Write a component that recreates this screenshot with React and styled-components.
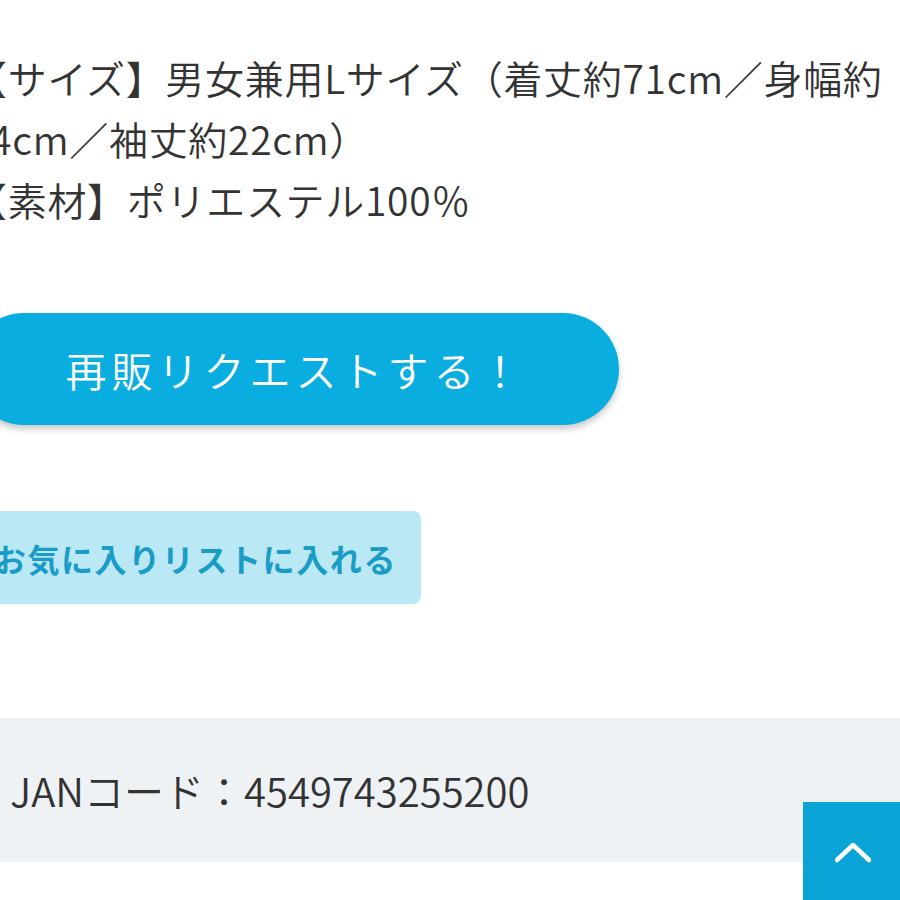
import React from "react";
import styled, { createGlobalStyle } from "styled-components";

const GlobalStyle = createGlobalStyle`
  html, body { margin: 0; padding: 0; background: #ffffff; }
  body {
    font-family: "Noto Sans CJK JP", "Noto Sans", sans-serif;
    color: #333333;
  }
`;

const Page = styled.div`
  position: relative;
  width: 900px;
  height: 900px;
  overflow: hidden;
  background: #ffffff;
`;

const Content = styled.div`
  display: flex;
  flex-direction: column;
  align-items: flex-start;
  margin-left: -32px;
  padding-top: 47px;
`;

const Spec = styled.p`
  margin: 0;
  width: 925px;
  font-size: 39px;
  font-weight: 350;
  line-height: 61px;
  letter-spacing: 0.7px;
  color: #333333;
`;

const RequestButton = styled.button`
  margin-top: 83px;
  width: 651px;
  height: 112px;
  border: none;
  border-radius: 56px;
  background: #0aaddf;
  box-shadow: 0 4px 7px rgba(0, 0, 0, 0.22);
  color: #ffffff;
  font-family: inherit;
  font-size: 41px;
  font-weight: 350;
  letter-spacing: 5px;
  display: flex;
  align-items: center;
  justify-content: center;
  padding: 0 0 0 4px;
`;

const FavoriteButton = styled.button`
  margin-top: 86px;
  width: 453px;
  height: 93px;
  border: none;
  border-radius: 8px;
  background: #bbe8f5;
  color: #1a9cc6;
  font-family: inherit;
  font-size: 32px;
  font-weight: 700;
  letter-spacing: 1.6px;
  display: flex;
  align-items: center;
  justify-content: flex-end;
  padding: 0 24px 0 0;
`;

const CodeBand = styled.div`
  margin-top: 114px;
  margin-left: 32px;
  width: 900px;
  height: 144px;
  background: #eef2f5;
  display: flex;
  align-items: center;
  padding-left: 10px;
  box-sizing: border-box;
  font-size: 40px;
  font-weight: 350;
  letter-spacing: 0;
  color: #333333;
`;

const TopButton = styled.div`
  position: absolute;
  left: 803px;
  top: 802px;
  width: 100px;
  height: 100px;
  background: #0ba4d6;
  display: flex;
  align-items: center;
  justify-content: center;
`;

export default function App() {
  return (
    <>
      <GlobalStyle />
      <Page>
        <Content>
          <Spec>
            【サイズ】男女兼用Lサイズ（着丈約71cm／身幅約54cm／袖丈約22cm）
            <br />
            【素材】ポリエステル100％
          </Spec>
          <RequestButton>再販リクエストする！</RequestButton>
          <FavoriteButton>お気に入りリストに入れる</FavoriteButton>
          <CodeBand>JANコード：4549743255200</CodeBand>
        </Content>
        <TopButton>
          <svg width="40" height="24" viewBox="0 0 40 24">
            <path
              d="M4 20 L20 5 L36 20"
              fill="none"
              stroke="#ffffff"
              strokeWidth="4.5"
              strokeLinecap="round"
              strokeLinejoin="round"
            />
          </svg>
        </TopButton>
      </Page>
    </>
  );
}
